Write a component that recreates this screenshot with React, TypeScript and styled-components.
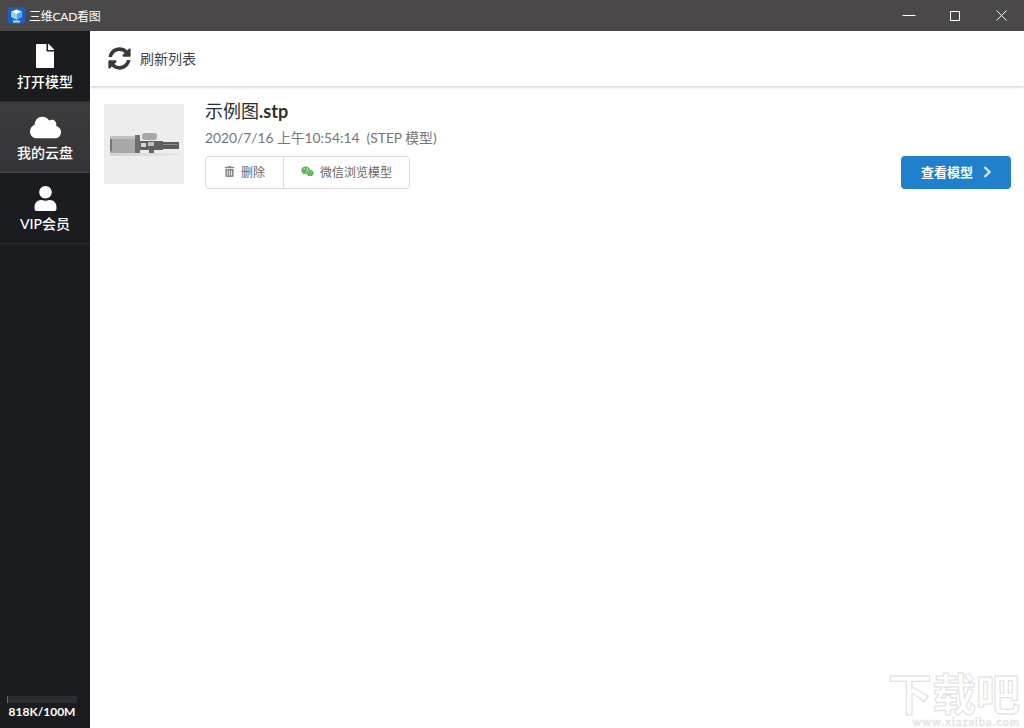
import React from "react";
import styled, { createGlobalStyle } from "styled-components";
import { FaCloud, FaFile, FaSyncAlt, FaTrashAlt, FaUser, FaWeixin } from "react-icons/fa";

const GlobalStyle = createGlobalStyle`
  html, body, #root {
    margin: 0;
    height: 100%;
  }
  body {
    font-family: Lato, "Noto Sans CJK SC", sans-serif;
    overflow: hidden;
  }
`;

const Window = styled.div`
  position: relative;
  width: 1024px;
  height: 728px;
  display: flex;
  flex-direction: column;
  overflow: hidden;
  background: #fff;
`;

const TitleBar = styled.div`
  height: 31px;
  flex: none;
  display: flex;
  align-items: center;
  padding-left: 8px;
  background: #4a4849;
  color: #fff;
  font-size: 12px;
`;

const AppLogo = styled.svg`
  width: 17px;
  height: 17px;
  margin-right: 4px;
`;

const WindowTitle = styled.span`
  flex: 1;
  letter-spacing: -0.25px;
`;

const WindowButton = styled.div`
  width: 46px;
  height: 31px;
  display: flex;
  align-items: center;
  justify-content: center;
`;

const Body = styled.div`
  flex: 1;
  display: flex;
  min-height: 0;
`;

const Sidebar = styled.div`
  width: 90px;
  flex: none;
  display: flex;
  flex-direction: column;
  background: #1a1c20;
`;

const NavItem = styled.div<{ $active?: boolean }>`
  height: 71px;
  box-sizing: border-box;
  display: flex;
  flex-direction: column;
  align-items: center;
  padding-top: 12px;
  background: ${(p) => (p.$active ? "linear-gradient(#3c3c3f, #333437)" : "transparent")};
  border-bottom: 1px solid ${(p) => (p.$active ? "#47474a" : "#2b2c30")};
  color: #fff;
  font-size: 14px;
  font-weight: 500;
  line-height: 18px;
  white-space: nowrap;
`;

const NavIcon = styled.div`
  height: 26px;
  margin-bottom: 4px;
  display: flex;
  align-items: center;
  justify-content: center;
`;

const Quota = styled.div`
  margin-top: auto;
  padding: 0 13px 8px 7px;
  color: #fff;
  font-size: 12px;
  font-weight: 700;
  text-align: center;
`;

const QuotaTrack = styled.div`
  height: 7px;
  margin-bottom: 1px;
  background: #2b2d30;
  border-radius: 2px;
`;

const QuotaFill = styled.div`
  height: 100%;
  background: #4f7a4f;
`;

const QuotaLabel = styled.div`
  line-height: 16px;
  white-space: nowrap;
`;

const Main = styled.div`
  flex: 1;
  display: flex;
  flex-direction: column;
  min-width: 0;
`;

const Toolbar = styled.div`
  height: 55px;
  flex: none;
  display: flex;
  align-items: center;
  gap: 9px;
  padding-left: 18px;
  box-shadow: 0 1px 3px rgba(0, 0, 0, 0.22);
  color: #444;
  font-size: 14px;
`;

const ToolbarLabel = styled.span`
  margin-bottom: 2px;
`;

const ModelRow = styled.div`
  display: flex;
  padding: 18px 13px 0 14px;
`;

const Thumb = styled.div`
  width: 80px;
  height: 80px;
  flex: none;
  margin-right: 21px;
  background: #eeedee;
  display: flex;
  align-items: center;
  justify-content: center;
`;

const ModelInfo = styled.div`
  flex: 1;
  display: flex;
  flex-direction: column;
`;

const ModelName = styled.div`
  height: 29px;
  line-height: 15px;
  color: #2e2e2e;
  font-size: 18px;
`;

const NameExt = styled.span`
  font-weight: 700;
`;

const ModelDate = styled.div`
  height: 23px;
  line-height: 9px;
  color: #767676;
  font-size: 13.8px;
  white-space: pre;
`;

const ActionRow = styled.div`
  display: flex;
  align-items: flex-end;
  justify-content: space-between;
`;

const ButtonGroup = styled.div`
  height: 33px;
  box-sizing: border-box;
  display: flex;
  border: 1px solid #dcdcdc;
  border-radius: 4px;
`;

const GroupButton = styled.div<{ $width: number }>`
  width: ${(p) => p.$width}px;
  display: flex;
  align-items: center;
  justify-content: center;
  gap: 6px;
  padding-bottom: 2px;
  box-sizing: border-box;
  color: #666;
  font-size: 12px;
  & + & {
    border-left: 1px solid #dcdcdc;
  }
`;

const ViewButton = styled.div`
  width: 110px;
  height: 33px;
  display: flex;
  align-items: center;
  justify-content: center;
  gap: 10px;
  padding-bottom: 2px;
  box-sizing: border-box;
  background: #2080cc;
  border-radius: 4px;
  color: #fff;
  font-size: 13px;
  font-weight: 700;
`;

const Watermark = styled.div`
  position: absolute;
  right: 4px;
  bottom: 0;
  width: 132px;
  display: flex;
  flex-direction: column;
  align-items: flex-end;
  color: #fff;
  -webkit-text-stroke: 1px #dedede;
  pointer-events: none;
`;

const WatermarkTitle = styled.div`
  font-size: 44px;
  font-weight: 700;
  line-height: 44px;
  height: 44px;
  white-space: nowrap;
`;

const WatermarkUrl = styled.div`
  font-size: 11px;
  font-weight: 700;
  line-height: 12px;
  height: 12px;
  letter-spacing: 1px;
  color: #ececec;
  -webkit-text-stroke: 0.4px #dedede;
`;

const Logo = () => (
  <AppLogo viewBox="0 0 17 17">
    <rect width="17" height="17" rx="3" fill="#1d5fc0" />
    <path d="M8.5 2.5l5 2v5.5l-5 2.5-5-2.5V4.5z" fill="#fff" />
    <path d="M8.5 7l5-2.5V10l-5 2.5z" fill="#3fa9ee" />
    <path d="M8.5 7v5.500l-5-2.500V4.500z" fill="#8fd2f7" />
    <rect x="5" y="13.500" width="7" height="2" fill="#bcd7f3" />
  </AppLogo>
);

// 缩略图：气缸模型
const CylinderThumb = () => (
  <svg width="80" height="80" viewBox="0 0 80 80" style={{ filter: "blur(0.5px)" }}>
    <defs>
      <linearGradient id="shadow" x1="0" y1="0" x2="1" y2="0">
        <stop offset="0" stopColor="#d2d1d1" />
        <stop offset="1" stopColor="#e8e7e7" />
      </linearGradient>
    </defs>
    <rect x="6" y="49" width="70" height="3" fill="url(#shadow)" />
    <rect x="6" y="32" width="25" height="17" fill="#a9a9a7" />
    <rect x="6" y="32" width="25" height="3" fill="#c0c0be" />
    <rect x="6" y="35" width="2" height="12" fill="#77777a" />
    <rect x="31" y="31" width="5" height="18" fill="#6e6e6c" />
    <rect x="38" y="29" width="15" height="7" rx="3" fill="#a8a8a4" />
    <rect x="36" y="37" width="23" height="9" fill="#5f5f5d" />
    <rect x="37" y="39" width="5" height="4" fill="#d6d6d4" />
    <rect x="44" y="38" width="6" height="4" fill="#c0c0bc" />
    <rect x="45" y="46" width="5" height="3" fill="#666664" />
    <rect x="59" y="38" width="16" height="7" fill="#5b5b59" />
    <rect x="59" y="40" width="15" height="1" fill="#8c8c88" />
  </svg>
);

export default function App() {
  return (
    <Window>
      <GlobalStyle />
      <TitleBar>
        <Logo />
        <WindowTitle>三维CAD看图</WindowTitle>
        <WindowButton>
          <svg width="14" height="12" viewBox="0 0 14 12">
            <path d="M0.500 5.500h13" stroke="#fff" fill="none" />
          </svg>
        </WindowButton>
        <WindowButton>
          <svg width="10" height="10" viewBox="0 0 10 10">
            <rect x="0.500" y="0.500" width="9" height="9" stroke="#fff" fill="none" />
          </svg>
        </WindowButton>
        <WindowButton>
          <svg width="11" height="11" viewBox="0 0 11 11">
            <path d="M0.500 0.500l10 10M10.500 0.500l-10 10" stroke="#fff" fill="none" />
          </svg>
        </WindowButton>
      </TitleBar>
      <Body>
        <Sidebar>
          <NavItem>
            <NavIcon>
              <FaFile size={24} />
            </NavIcon>
            打开模型
          </NavItem>
          <NavItem $active>
            <NavIcon>
              <FaCloud size={31} />
            </NavIcon>
            我的云盘
          </NavItem>
          <NavItem>
            <NavIcon>
              <FaUser size={25} />
            </NavIcon>
            VIP会员
          </NavItem>
          <Quota>
            <QuotaTrack>
              <QuotaFill style={{ width: `${(818 / 102400) * 100 + 1}%` }} />
            </QuotaTrack>
            <QuotaLabel>818K/100M</QuotaLabel>
          </Quota>
        </Sidebar>
        <Main>
          <Toolbar>
            <FaSyncAlt size={23} color="#3a3a3a" />
            <ToolbarLabel>刷新列表</ToolbarLabel>
          </Toolbar>
          <ModelRow>
            <Thumb>
              <CylinderThumb />
            </Thumb>
            <ModelInfo>
              <ModelName>
                示例图<NameExt>.stp</NameExt>
              </ModelName>
              <ModelDate>2020/7/16 上午10:54:14  (STEP 模型)</ModelDate>
              <ActionRow>
                <ButtonGroup>
                  <GroupButton $width={77}>
                    <FaTrashAlt size={11} color="#8a8a8a" />
                    删除
                  </GroupButton>
                  <GroupButton $width={126}>
                    <FaWeixin size={13} color="#5cb85c" />
                    微信浏览模型
                  </GroupButton>
                </ButtonGroup>
                <ViewButton>
                  查看模型
                  <svg width="8" height="12" viewBox="0 0 8 12">
                    <path d="M1.500 1l5 5-5 5" stroke="#cfe6f7" strokeWidth="2.400" fill="none" />
                  </svg>
                </ViewButton>
              </ActionRow>
            </ModelInfo>
          </ModelRow>
        </Main>
      </Body>
      <Watermark>
        <WatermarkTitle>下载吧</WatermarkTitle>
        <WatermarkUrl>www.xiazaiba.com</WatermarkUrl>
      </Watermark>
    </Window>
  );
}
